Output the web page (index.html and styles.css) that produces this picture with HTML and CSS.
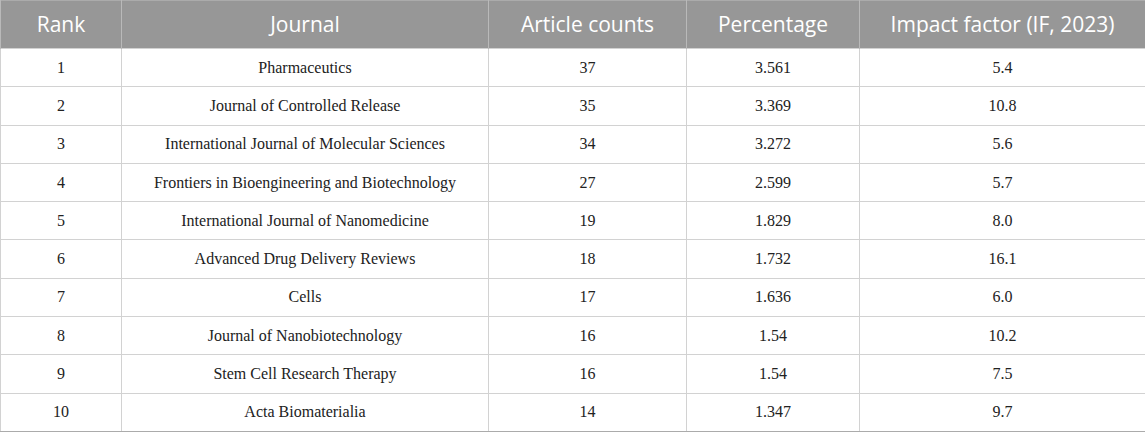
FILE: index.html
```html
<!DOCTYPE html>
<html lang="en">
<head>
    <meta charset="UTF-8">
    <title>Top journals</title>
    <link rel="stylesheet" href="styles.css">
</head>
<body>
    <table class="journal-table">
        <colgroup>
            <col class="col-rank">
            <col class="col-journal">
            <col class="col-count">
            <col class="col-pct">
            <col class="col-if">
        </colgroup>
        <thead>
            <tr>
                <th>Rank</th>
                <th>Journal</th>
                <th>Article counts</th>
                <th>Percentage</th>
                <th>Impact factor (IF, 2023)</th>
            </tr>
        </thead>
        <tbody>
            <tr><td>1</td><td>Pharmaceutics</td><td>37</td><td>3.561</td><td>5.4</td></tr>
            <tr><td>2</td><td>Journal of Controlled Release</td><td>35</td><td>3.369</td><td>10.8</td></tr>
            <tr><td>3</td><td>International Journal of Molecular Sciences</td><td>34</td><td>3.272</td><td>5.6</td></tr>
            <tr><td>4</td><td>Frontiers in Bioengineering and Biotechnology</td><td>27</td><td>2.599</td><td>5.7</td></tr>
            <tr><td>5</td><td>International Journal of Nanomedicine</td><td>19</td><td>1.829</td><td>8.0</td></tr>
            <tr><td>6</td><td>Advanced Drug Delivery Reviews</td><td>18</td><td>1.732</td><td>16.1</td></tr>
            <tr><td>7</td><td>Cells</td><td>17</td><td>1.636</td><td>6.0</td></tr>
            <tr><td>8</td><td>Journal of Nanobiotechnology</td><td>16</td><td>1.54</td><td>10.2</td></tr>
            <tr><td>9</td><td>Stem Cell Research Therapy</td><td>16</td><td>1.54</td><td>7.5</td></tr>
            <tr><td>10</td><td>Acta Biomaterialia</td><td>14</td><td>1.347</td><td>9.7</td></tr>
        </tbody>
    </table>
</body>
</html>
```

FILE: styles.css
```css
:root {
    --head-bg: #979797;
    --line: #d2d2d2;
    --outer: #ababab;
    --text: #222222;
}

body {
    margin: 0;
    background: #ffffff;
}

.journal-table {
    width: 1145px;
    border-collapse: collapse;
    table-layout: fixed;
    border: 1px solid var(--outer);
}

.col-rank { width: 121px; }
.col-journal { width: 367px; }
.col-count { width: 198px; }
.col-pct { width: 173px; }
.col-if { width: 286px; }

.journal-table th {
    height: 46px;
    padding: 0 4px 1px;
    background: var(--head-bg);
    color: #ffffff;
    font-family: "Open Sans", "Noto Sans", sans-serif;
    font-size: 21px;
    font-weight: 400;
    text-align: center;
    border-left: 1px solid #b9b9b9;
}

.journal-table td {
    height: 37.3px;
    padding: 0 4px;
    color: var(--text);
    font-family: "Liberation Serif", serif;
    font-size: 16px;
    text-align: center;
    border: 1px solid var(--line);
}

.journal-table tbody tr:last-child td {
    border-bottom: 1px solid var(--outer);
}
```
